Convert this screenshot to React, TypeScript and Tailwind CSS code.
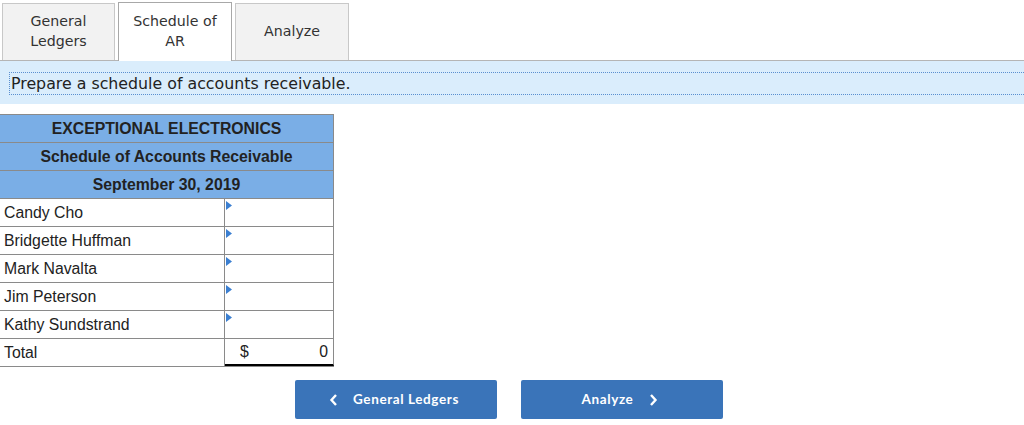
import React from "react";

const rows = ["Candy Cho", "Bridgette Huffman", "Mark Navalta", "Jim Peterson", "Kathy Sundstrand"];

function Marker() {
  return (
    <svg className="absolute left-[1px] top-[2px]" width="6" height="9" viewBox="0 0 6 9">
      <polygon points="0,0 6,4.5 0,9" fill="#3b7fd1" />
    </svg>
  );
}

const verdana = { fontFamily: "'DejaVu Sans', Verdana, sans-serif" };

export default function App() {
  return (
    <div className="w-[1024px] h-[425px] bg-white overflow-hidden" style={{ fontFamily: "'Liberation Sans', Arial, sans-serif" }}>
      {/* Tabs */}
      <div className="flex items-end pl-[2px] pt-[3px] gap-[3px] border-b border-[#b5b5b5] h-[61px]">
        <div className="w-[113px] h-[57px] bg-[#f2f2f2] border border-b-0 border-[#c8c8c8] flex items-center justify-center text-center text-[14.2px] leading-[20px] text-[#333] pb-[2px]" style={verdana}>
          General<br />Ledgers
        </div>
        <div className="w-[114px] h-[59px] -mb-[1px] bg-white border border-b-0 border-[#a8a8a8] flex items-center justify-center text-center text-[14.2px] leading-[20px] text-[#333] pb-[2px]" style={verdana}>
          Schedule of<br />AR
        </div>
        <div className="w-[114px] h-[57px] bg-[#f2f2f2] border border-b-0 border-[#c8c8c8] flex items-center justify-center text-center text-[14.2px] leading-[20px] text-[#333] pb-[2px]" style={verdana}>
          Analyze
        </div>
      </div>

      {/* Instruction band */}
      <div className="h-[43px] bg-[#daedfc] pt-[11px] pl-[9px]">
        <div className="h-[23px] border border-dotted border-[#5a8fd0] border-r-0 pl-[1px] text-[15.8px] leading-[22px] text-[#222]" style={verdana}>
          Prepare a schedule of accounts receivable.
        </div>
      </div>

      {/* Table */}
      <div className="mt-[10px] w-[334px] text-[15.8px] text-[#222]">
        <div className="border border-[#8a8a8a] border-l-0 bg-[#7aaee6]">
          <div className="h-[28px] flex items-center justify-center font-bold border-b border-[#8a8a8a]">EXCEPTIONAL ELECTRONICS</div>
          <div className="h-[28px] flex items-center justify-center font-bold border-b border-[#8a8a8a]">Schedule of Accounts Receivable</div>
          <div className="h-[27px] flex items-center justify-center font-bold">September 30, 2019</div>
        </div>
        {rows.map((r) => (
          <div key={r} className="flex h-[28px] border-b border-[#8a8a8a]">
            <div className="w-[225px] pl-[4px] pt-[1px] flex items-center border-r border-[#8a8a8a]">{r}</div>
            <div className="relative flex-1 border-r border-[#8a8a8a]">
              <Marker />
            </div>
          </div>
        ))}
        <div className="flex h-[28px] border-b border-[#8a8a8a]">
          <div className="w-[225px] pl-[4px] pt-[1px] flex items-center border-r border-[#8a8a8a]">Total</div>
          <div className="flex-1 flex items-center justify-between pl-[15px] pr-[5px] pt-[1px] border-r border-[#8a8a8a] border-b-2 border-b-black">
            <span>$</span>
            <span>0</span>
          </div>
        </div>
      </div>

      {/* Buttons */}
      <div className="flex justify-center gap-[24px] pr-[6px] mt-[13px]" style={{ fontFamily: "Lato, 'Open Sans', sans-serif" }}>
        <button className="w-[202px] h-[39px] bg-[#3a74b9] rounded-[2px] text-white text-[13.5px] tracking-[0.6px] font-bold flex items-center justify-center gap-[15px] pr-[4px]">
          <svg width="9" height="14" viewBox="0 0 9 14"><path d="M7 2 L2.5 7 L7 12" stroke="white" strokeWidth="2.4" fill="none" /></svg>
          <span>General Ledgers</span>
        </button>
        <button className="w-[202px] h-[39px] bg-[#3a74b9] rounded-[2px] text-white text-[13.5px] tracking-[0.6px] font-bold flex items-center justify-center gap-[16px] pr-[4px]">
          <span>Analyze</span>
          <svg width="9" height="14" viewBox="0 0 9 14"><path d="M2 2 L6.5 7 L2 12" stroke="white" strokeWidth="2.4" fill="none" /></svg>
        </button>
      </div>
    </div>
  );
}
